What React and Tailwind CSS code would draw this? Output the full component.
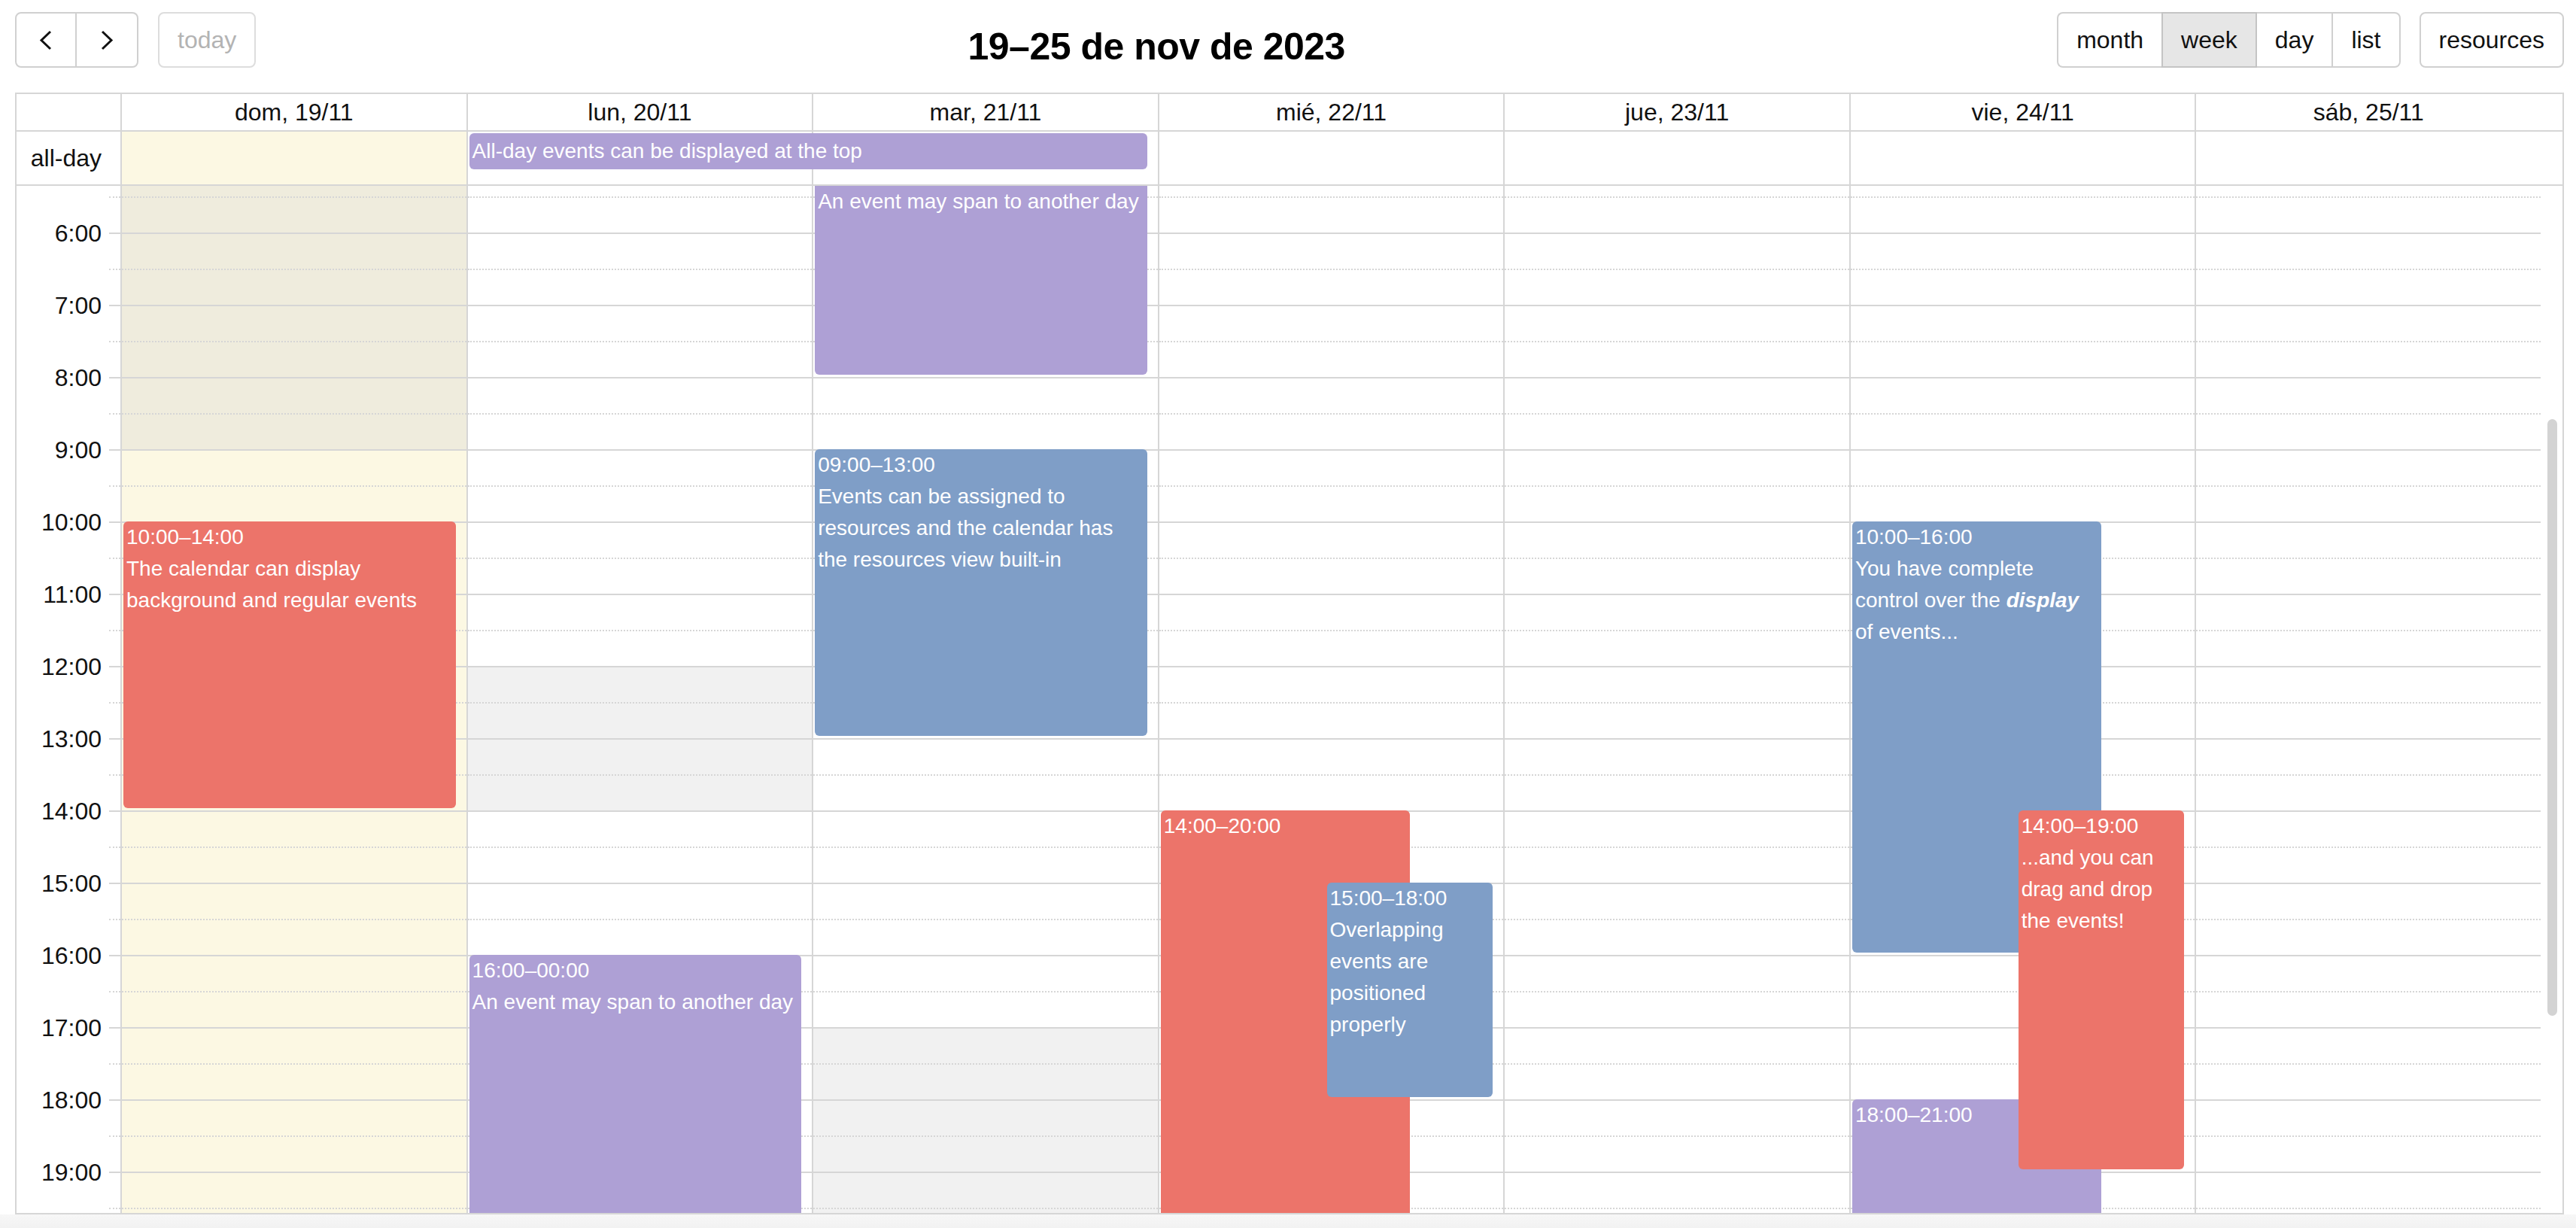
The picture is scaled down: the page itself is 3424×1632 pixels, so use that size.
import React from "react";

const days = ["dom, 19/11", "lun, 20/11", "mar, 21/11", "mié, 22/11", "jue, 23/11", "vie, 24/11", "sáb, 25/11"];

const SLOT_START = 5.5;
const OFFSET = 14;
const HOUR = 96;
const y = (t) => OFFSET + (t - SLOT_START) * HOUR;
const slots = Array.from({ length: 30 }, (_, i) => 5.5 + i * 0.5);

const colorClass = {
  red: "bg-[#ec746a]",
  blue: "bg-[#7f9ec7]",
  purple: "bg-[#aea0d5]",
};

const bgEvents = {
  0: [{ top: 0, bottom: y(9) }],
  1: [{ top: y(12), bottom: y(14) }],
  2: [{ top: y(17), bottom: 2000 }],
};

const events = {
  0: [
    {
      start: 10, end: 14, color: "red", left: 0, width: 100,
      lines: ["10:00–14:00", "The calendar can display", "background and regular events"],
    },
  ],
  1: [
    {
      start: 16, end: 24, color: "purple", left: 0, width: 100,
      lines: ["16:00–00:00", "An event may span to another day"],
    },
  ],
  2: [
    {
      start: null, end: 8, color: "purple", left: 0, width: 100,
      lines: ["An event may span to another day"],
    },
    {
      start: 9, end: 13, color: "blue", left: 0, width: 100,
      lines: ["09:00–13:00", "Events can be assigned to", "resources and the calendar has", "the resources view built-in"],
    },
  ],
  3: [
    { start: 14, end: 20, color: "red", left: 0, width: 75, lines: ["14:00–20:00"] },
    {
      start: 15, end: 18, color: "blue", left: 50, width: 50,
      lines: ["15:00–18:00", "Overlapping", "events are", "positioned", "properly"],
    },
  ],
  5: [
    {
      start: 10, end: 16, color: "blue", left: 0, width: 75,
      lines: [
        "10:00–16:00",
        "You have complete",
        <span key="c">
          control over the <b><i>display</i></b>
        </span>,
        "of events...",
      ],
    },
    { start: 18, end: 21, color: "purple", left: 0, width: 75, lines: ["18:00–21:00"] },
    {
      start: 14, end: 19, color: "red", left: 50, width: 50,
      lines: ["14:00–19:00", "...and you can", "drag and drop", "the events!"],
    },
  ],
};

function Chevron({ dir }) {
  const pts = dir === "left" ? "15,2 3,13.5 15,25" : "3,2 15,13.5 3,25";
  return (
    <svg width="18" height="27" viewBox="0 0 18 27" fill="none">
      <polyline points={pts} stroke="#111" strokeWidth="3" strokeLinejoin="miter" />
    </svg>
  );
}

function Toolbar() {
  return (
    <div className="flex justify-between items-start h-[74px] shrink-0">
      <div className="flex gap-[26px]">
        <div className="flex">
          <button className="w-[82px] h-[74px] border-2 border-[#d0d0d0] rounded-l-[8px] flex items-center justify-center bg-white">
            <Chevron dir="left" />
          </button>
          <button className="w-[82px] h-[74px] border-2 border-l-0 border-[#d0d0d0] rounded-r-[8px] flex items-center justify-center bg-white">
            <Chevron dir="right" />
          </button>
        </div>
        <button className="h-[74px] px-[24px] border-2 border-[#dddddd] rounded-[8px] text-[#b3b3b3] leading-[48px] bg-white">
          today
        </button>
      </div>
      <h2 className="mt-[21px] text-[50px] leading-[50px] font-bold tracking-[-0.5px] text-black whitespace-nowrap">
        19–25 de nov de 2023
      </h2>
      <div className="flex gap-[25px]">
        <div className="flex">
          <button className="h-[74px] px-[24px] border-2 border-r-0 border-[#d0d0d0] rounded-l-[8px] leading-[48px] bg-white">month</button>
          <button className="h-[74px] px-[24px] border-2 border-[#c4c4c4] leading-[48px] bg-[#e6e6e6]">week</button>
          <button className="h-[74px] px-[24px] border-2 border-l-0 border-[#d0d0d0] leading-[48px] bg-white">day</button>
          <button className="h-[74px] px-[24px] border-2 border-l-0 border-[#d0d0d0] rounded-r-[8px] leading-[48px] bg-white">list</button>
        </div>
        <button className="h-[74px] px-[24px] border-2 border-[#d0d0d0] rounded-[8px] leading-[48px] bg-white">resources</button>
      </div>
    </div>
  );
}

function TimeCol() {
  return (
    <div className="w-[138px] shrink-0 flex flex-col">
      <div className="h-[14px] shrink-0" />
      {slots.map((s) => {
        const hour = Number.isInteger(s);
        return (
          <div key={s} className="h-[48px] shrink-0 flex">
            <div className="flex-1 min-w-0">
              {hour && s <= 19 && (
                <div className="-mt-[23px] h-[48px] leading-[48px] text-right pr-[10px] whitespace-nowrap">
                  {s}:00
                </div>
              )}
            </div>
            <div
              className={
                hour
                  ? "w-[15px] border-t-2 border-solid border-[#d6d6d6]"
                  : "w-[15px] border-t-2 border-dotted border-[#d6d6d6]"
              }
            />
          </div>
        );
      })}
    </div>
  );
}

function Event({ ev }) {
  const top = ev.start === null ? 0 : y(ev.start);
  const bottom = y(ev.end) - 3;
  const rounded = ev.start === null ? "rounded-b-[6px]" : "rounded-[6px]";
  return (
    <div
      className={`absolute overflow-hidden ${rounded} ${colorClass[ev.color]} text-white text-[28px] leading-[42px] px-[4px]`}
      style={{ top, height: bottom - top, left: `${ev.left}%`, width: `${ev.width}%` }}
    >
      {ev.lines.map((l, i) => (
        <div key={i} className="whitespace-nowrap">
          {l}
        </div>
      ))}
    </div>
  );
}

function DayCol({ index }) {
  const today = index === 0;
  return (
    <div
      className={
        today
          ? "relative flex-1 min-w-0 border-l-2 border-[#d6d6d6] flex flex-col bg-[#fcf8e3]"
          : "relative flex-1 min-w-0 border-l-2 border-[#d6d6d6] flex flex-col"
      }
    >
      {(bgEvents[index] || []).map((b, i) => (
        <div
          key={i}
          className="absolute left-0 right-0 bg-[rgba(210,210,210,0.3)]"
          style={{ top: b.top, height: b.bottom - b.top }}
        />
      ))}
      <div className="relative h-[14px] shrink-0" />
      {slots.map((s) => (
        <div
          key={s}
          className={
            Number.isInteger(s)
              ? "relative h-[48px] shrink-0 border-t-2 border-solid border-[#d6d6d6]"
              : "relative h-[48px] shrink-0 border-t-2 border-dotted border-[#d6d6d6]"
          }
        />
      ))}
      <div className="absolute top-0 bottom-0 left-[2px] right-[14px] z-10">
        {(events[index] || []).map((ev, i) => (
          <Event key={i} ev={ev} />
        ))}
      </div>
    </div>
  );
}

function Grid() {
  return (
    <div className="mt-[33px] flex-1 min-h-0 flex flex-col border-2 border-[#d6d6d6]">
      <div className="flex h-[50px] shrink-0 border-b-2 border-[#d6d6d6]">
        <div className="w-[138px] shrink-0" />
        {days.map((d) => (
          <div key={d} className="flex-1 min-w-0 border-l-2 border-[#d6d6d6] text-center leading-[48px] whitespace-nowrap">
            {d}
          </div>
        ))}
        <div className="w-[29px] shrink-0" />
      </div>
      <div className="flex h-[72px] shrink-0 border-b-2 border-[#d6d6d6]">
        <div className="w-[138px] shrink-0 text-right pr-[25px] leading-[70px]">all-day</div>
        {days.map((d, i) => (
          <div
            key={d}
            className={
              i === 0
                ? "relative flex-1 min-w-0 border-l-2 border-[#d6d6d6] bg-[#fcf8e3]"
                : "relative flex-1 min-w-0 border-l-2 border-[#d6d6d6]"
            }
          >
            {i === 1 && (
              <div className="absolute top-[2px] left-[2px] w-[calc(200%-14px)] h-[48px] z-10 rounded-[6px] bg-[#aea0d5] text-white text-[28px] leading-[42px] pt-[3px] px-[4px] whitespace-nowrap overflow-hidden">
                All-day events can be displayed at the top
              </div>
            )}
          </div>
        ))}
        <div className="w-[29px] shrink-0" />
      </div>
      <div className="relative flex-1 min-h-0 flex overflow-hidden">
        <TimeCol />
        {days.map((d, i) => (
          <DayCol key={d} index={i} />
        ))}
        <div className="w-[29px] shrink-0 flex flex-col pt-[310px] pl-[9px]">
          <div className="w-[13px] h-[793px] shrink-0 rounded-full bg-[#d3d3d3]" />
        </div>
      </div>
    </div>
  );
}

export default function App() {
  return (
    <div className="w-[3424px] h-[1632px] overflow-hidden bg-white flex flex-col font-['Liberation_Sans',Arial,sans-serif] text-[32px] text-[#111]">
      <div className="flex-1 min-h-0 flex flex-col pl-[20px] pr-[16px] pt-[16px]">
        <Toolbar />
        <Grid />
      </div>
      <div className="h-[18px] shrink-0 bg-gradient-to-b from-[#f7f7f7] to-[#f2f2f2]" />
    </div>
  );
}
